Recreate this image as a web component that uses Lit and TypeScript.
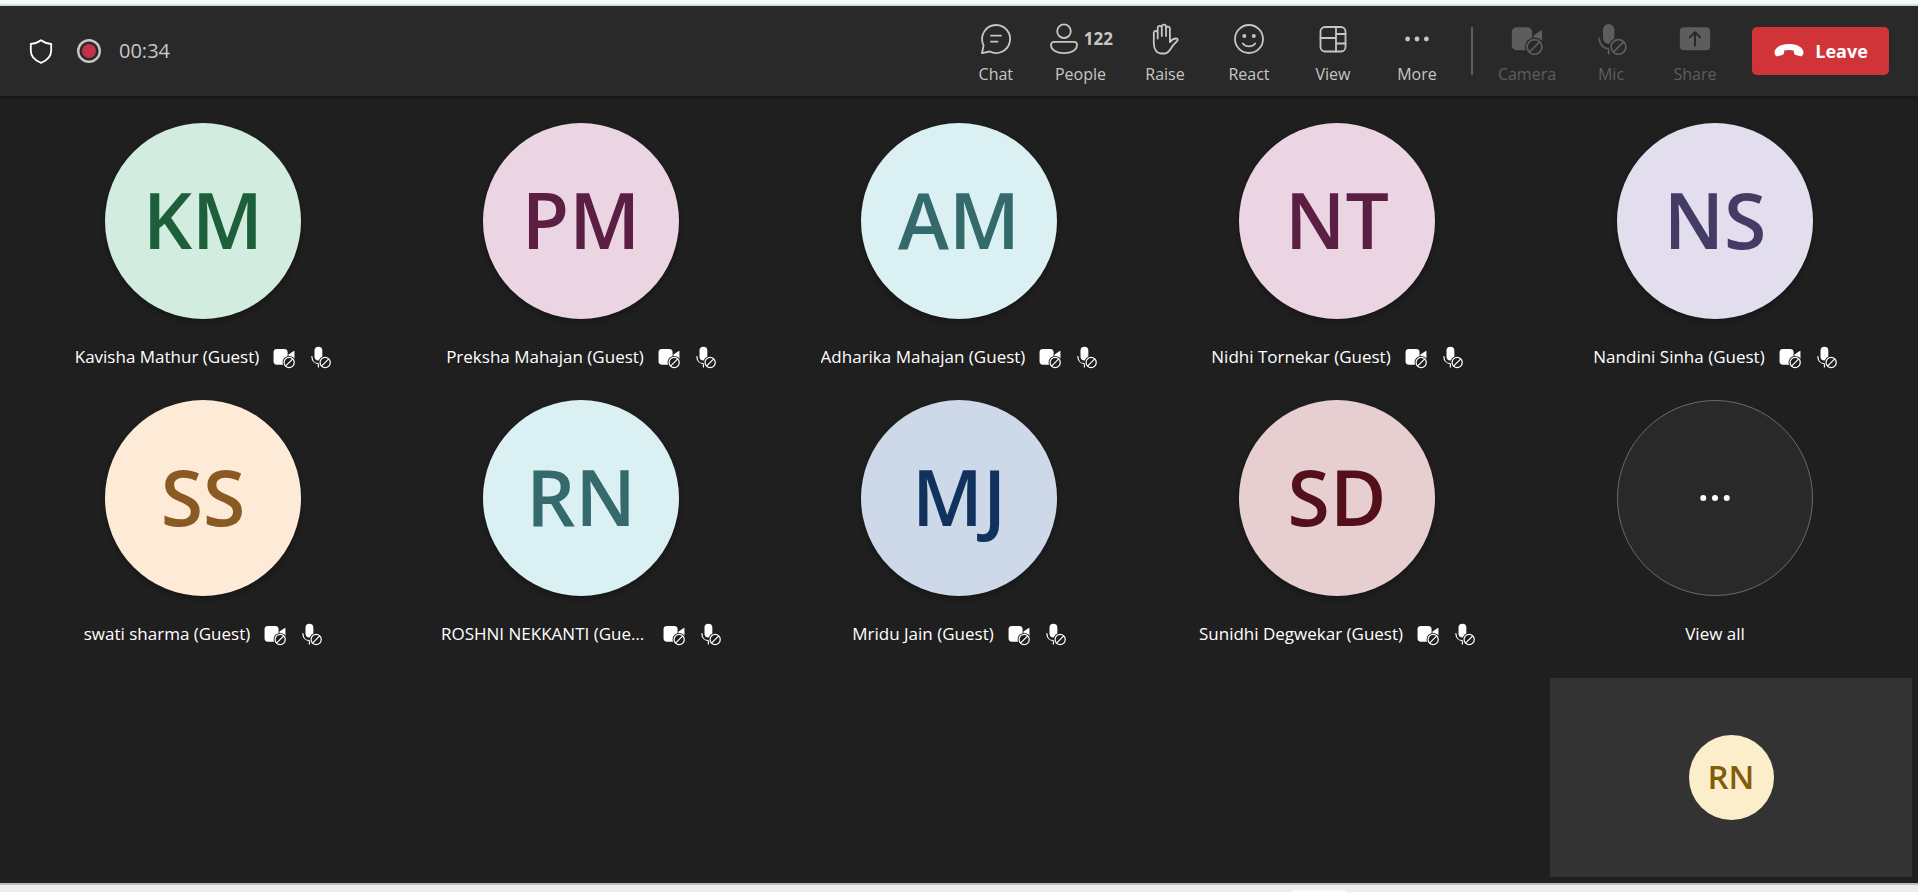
import { LitElement, html, css, svg, nothing } from "lit";
import { customElement, property } from "lit/decorators.js";

interface Participant {
  initials: string;
  name: string;
  bg: string;
  fg: string;
}

const PEOPLE: Participant[] = [
  { initials: "KM", name: "Kavisha Mathur (Guest)", bg: "#d2ecdf", fg: "#1c5f3a" },
  { initials: "PM", name: "Preksha Mahajan (Guest)", bg: "#ecd5e2", fg: "#5b1f43" },
  { initials: "AM", name: "Adharika Mahajan (Guest)", bg: "#dbf0f3", fg: "#346a6b" },
  { initials: "NT", name: "Nidhi Tornekar (Guest)", bg: "#ecd5e2", fg: "#5b1f43" },
  { initials: "NS", name: "Nandini Sinha (Guest)", bg: "#e2deee", fg: "#443c64" },
  { initials: "SS", name: "swati sharma (Guest)", bg: "#fdead7", fg: "#8a5a24" },
  { initials: "RN", name: "ROSHNI NEKKANTI (Guest)", bg: "#dbf0f3", fg: "#346a6b" },
  { initials: "MJ", name: "Mridu Jain (Guest)", bg: "#cdd9e9", fg: "#10325c" },
  { initials: "SD", name: "Sunidhi Degwekar (Guest)", bg: "#e7cfd1", fg: "#53101a" },
];

const blocked = svg`
  <circle class="cut" cx="23.5" cy="24" r="9.6"/>
  <circle class="line" cx="23.5" cy="24" r="7.4"/>
  <path class="line" d="M18.6 28.9 28.4 19.1"/>`;

const ICONS: Record<string, unknown> = {
  shield: svg`<path class="line" d="M16 5.2C19 7.4 22.4 8.6 26.2 8.8V15.5C26.2 21.5 22.4 25.3 16 27.8 9.6 25.3 5.8 21.5 5.8 15.5V8.8C9.6 8.6 13 7.4 16 5.2Z"/>`,
  record: svg`<circle cx="16" cy="16" r="10.8" fill="none" stroke="currentColor" stroke-width="2.4"/><circle cx="16" cy="16" r="7" fill="#c4314b"/>`,
  chat: svg`<path class="line" d="M16.2 2A14 14 0 1 1 9.8 28.5L2 30.2 3.6 22.3A14 14 0 0 1 16.2 2Z"/><path class="line" d="M11 12.7H21M11 18.7H17.5"/>`,
  people: svg`<circle class="line" cx="16" cy="8.2" r="6.8"/><path class="line" d="M6 18.8H26A3 3 0 0 1 29 21.8C29 27 23.5 30.2 16 30.2S3 27 3 21.8A3 3 0 0 1 6 18.8Z"/>`,
  raise: svg`<path class="line" d="M4.8 20V9.5a2 2 0 0 1 3.9 0V15.5M8.7 9.5V5a2 2 0 0 1 4.1 0V13M12.8 4.5V3.7a2.1 2.1 0 0 1 4.2 0V13M17 5.6a1.9 1.9 0 0 1 3.9 0V19.2C22.5 17 25 15 28 15.6c1 .4 .8 1.6 .2 2.2L24 22.4C21 26.5 19.5 30.5 16 30.5H12C7 30.5 4.8 25 4.8 20"/>`,
  react: svg`<circle class="line" cx="16" cy="16" r="14"/><circle cx="11.3" cy="13" r="2"/><circle cx="20.8" cy="13" r="2"/><path class="line" d="M9.8 20.5C13 24.3 19 24.3 22.2 20.5"/>`,
  view: svg`<rect class="line" x="3.5" y="4" width="25" height="24.5" rx="4.5"/><path class="line" d="M19 4V28.5M3.5 15H19M19 11H28.5M19 20.5H28.5"/>`,
  more: svg`<circle cx="6.6" cy="16" r="2.4"/><circle cx="16" cy="16" r="2.4"/><circle cx="25.4" cy="16" r="2.4"/>`,
  camera: svg`<rect x="0.8" y="4.2" width="20.4" height="23" rx="5"/><path d="M22.5 12.4 30.2 7.2Q31.2 6.8 31.2 8V22L22.5 18Z"/>${blocked}`,
  mic: svg`<rect x="8" y="1" width="11.4" height="20" rx="5.7"/><path class="line" d="M4.2 15.5C4.5 21.5 8.5 25.6 13.7 25.8V30.5"/>${blocked}`,
  share: svg`<rect x="0.8" y="4.2" width="30.4" height="23" rx="4"/><path d="M16 22.6V9.6M10.8 14.4 16 9.2 21.2 14.4" fill="none" stroke="var(--surface)" stroke-width="2" stroke-linecap="round" stroke-linejoin="round"/>`,
  phone: svg`<path d="M16 9C22.5 9 28 11 30 15.2 30.8 17.4 30.6 19.4 29.2 20.7 28.4 21.4 27.5 21.3 26.5 21L22.7 19.9C21.5 19.5 21 18.8 20.9 17.6L20.7 15.6C17.6 14.7 14.4 14.7 11.3 15.6L11.1 17.6C11 18.8 10.5 19.5 9.3 19.9L5.5 21C4.5 21.3 3.6 21.4 2.8 20.7 1.4 19.4 1.2 17.4 2 15.2 4 11 9.5 9 16 9Z"/>`,
};

@customElement("call-icon")
class CallIcon extends LitElement {
  @property() name = "";

  static styles = css`
    :host {
      display: block;
      flex: none;
      width: var(--icon-size, 32px);
      height: var(--icon-size, 32px);
    }
    svg {
      display: block;
      width: 100%;
      height: 100%;
      overflow: visible;
      fill: currentColor;
    }
    .line {
      fill: none;
      stroke: currentColor;
      stroke-width: 1.8;
      stroke-linecap: round;
      stroke-linejoin: round;
    }
    .cut {
      fill: var(--surface);
    }
  `;

  render() {
    return html`<svg viewBox="0 0 32 32" aria-hidden="true">${ICONS[this.name]}</svg>`;
  }
}

@customElement("tool-button")
class ToolButton extends LitElement {
  @property() icon = "";
  @property() label = "";
  @property() count = "";
  @property({ type: Boolean }) disabled = false;

  static styles = css`
    :host {
      display: block;
    }
    button {
      display: flex;
      flex-direction: column;
      align-items: center;
      gap: 7px;
      min-width: 84px;
      padding: 7px 0 0;
      border: 0;
      background: none;
      color: #c8c6c4;
      font: 400 16px/24px "Open Sans", "Noto Sans", sans-serif;
      cursor: pointer;
    }
    button:disabled {
      color: #5f5d5b;
      cursor: default;
    }
    .top {
      display: flex;
      align-items: center;
      gap: 4px;
    }
    .counted {
      padding: 0 10px;
    }
    .count {
      font-weight: 700;
      font-size: 17px;
    }
  `;

  render() {
    return html`<button ?disabled=${this.disabled}>
      <span class=${this.count ? "top counted" : "top"}>
        <call-icon name=${this.icon}></call-icon>
        ${this.count ? html`<span class="count">${this.count}</span>` : nothing}
      </span>
      <span>${this.label}</span>
    </button>`;
  }
}

@customElement("app-root")
class AppRoot extends LitElement {
  static styles = css`
    :host {
      --surface: #1f1f1f;
      display: flex;
      flex-direction: column;
      box-sizing: border-box;
      min-height: 100vh;
      background: #ededed;
      color: #fff;
      font: 400 17px/24px "Open Sans", "Noto Sans", sans-serif;
    }
    .strip {
      height: 4px;
      background: #f5fbf9;
      border-bottom: 2px solid #d8ebe3;
    }
    .bar {
      --surface: #292929;
      display: flex;
      align-items: center;
      justify-content: space-between;
      height: 90px;
      padding: 0 29px 0 25px;
      background: var(--surface);
      box-shadow: 0 1px 3px rgba(0, 0, 0, 0.4);
      z-index: 1;
    }
    .status,
    .tools {
      display: flex;
      align-items: center;
    }
    .status {
      gap: 16px;
    }
    .record {
      color: #c8c6c4;
    }
    .timer {
      margin-left: -2px;
      color: #c8c6c4;
      font-size: 20px;
      line-height: 24px;
    }
    .divider {
      width: 2px;
      height: 48px;
      margin: 0 12px;
      background: #5f5d5b;
    }
    .leave {
      display: flex;
      align-items: center;
      justify-content: center;
      gap: 10px;
      min-width: 137px;
      height: 48px;
      margin-left: 15px;
      padding: 0 18px;
      border: 0;
      border-radius: 5px;
      background: #d13438;
      color: #fff;
      font: 700 18px/24px "Open Sans", "Noto Sans", sans-serif;
      cursor: pointer;
    }
    .stage {
      display: flex;
      flex: 1;
      flex-direction: column;
      justify-content: space-between;
      padding-bottom: 6px;
      background: var(--surface);
      border-bottom: 2px solid #bdbdbd;
    }
    .grid {
      display: grid;
      grid-template-columns: repeat(5, minmax(0, 1fr));
      row-gap: 31px;
      margin: 0;
      padding: 27px 14px 0;
      list-style: none;
    }
    .person {
      display: flex;
      flex-direction: column;
      align-items: center;
      gap: 26px;
    }
    .avatar {
      display: grid;
      place-items: center;
      box-sizing: border-box;
      width: 196px;
      height: 196px;
      padding-bottom: 2px;
      border-radius: 50%;
      box-shadow: 0 3px 6px rgba(0, 0, 0, 0.3);
      font-size: 77px;
      font-weight: 600;
      line-height: 96px;
    }
    .caption {
      --icon-size: 22px;
      display: flex;
      align-items: center;
      gap: 14px;
    }
    .name {
      max-width: 208px;
      overflow: hidden;
      text-overflow: ellipsis;
      white-space: nowrap;
    }
    .all {
      padding: 0;
      border: 0;
      background: none;
      color: inherit;
      font: inherit;
      cursor: pointer;
    }
    .dots {
      --icon-size: 40px;
      padding: 0;
      border: 1px solid #6a6a6a;
      background: #292929;
      box-shadow: none;
    }
    .self {
      display: grid;
      place-items: center;
      align-self: flex-end;
      width: 362px;
      height: 199px;
      margin: 0 6px;
      background: #333;
    }
    .self .avatar {
      width: 85px;
      height: 85px;
      box-shadow: none;
      background: #fdeecb;
      color: #835c0b;
      font-size: 33px;
      line-height: 40px;
    }
    .taskbar {
      display: flex;
      height: 7px;
      padding-left: 67.3%;
    }
    .tab {
      align-self: flex-end;
      width: 55px;
      height: 2px;
      border-radius: 3px 3px 0 0;
      background: #fafafa;
    }
  `;

  render() {
    return html`
      <div class="strip"></div>
      <header class="bar">
        <div class="status">
          <call-icon name="shield"></call-icon>
          <call-icon class="record" name="record"></call-icon>
          <span class="timer">00:34</span>
        </div>
        <nav class="tools" aria-label="Meeting controls">
          <tool-button icon="chat" label="Chat"></tool-button>
          <tool-button icon="people" label="People" count="122"></tool-button>
          <tool-button icon="raise" label="Raise"></tool-button>
          <tool-button icon="react" label="React"></tool-button>
          <tool-button icon="view" label="View"></tool-button>
          <tool-button icon="more" label="More"></tool-button>
          <span class="divider"></span>
          <tool-button icon="camera" label="Camera" disabled></tool-button>
          <tool-button icon="mic" label="Mic" disabled></tool-button>
          <tool-button icon="share" label="Share" disabled></tool-button>
          <button class="leave"><call-icon name="phone"></call-icon>Leave</button>
        </nav>
      </header>
      <main class="stage">
        <ul class="grid">
          ${PEOPLE.map(
            (p) => html`<li class="person">
              <div class="avatar" style="background:${p.bg};color:${p.fg}">${p.initials}</div>
              <div class="caption">
                <span class="name">${p.name}</span>
                <call-icon name="camera"></call-icon>
                <call-icon name="mic"></call-icon>
              </div>
            </li>`
          )}
          <li class="person">
            <button class="person all">
              <span class="avatar dots"><call-icon name="more"></call-icon></span>
              <span>View all</span>
            </button>
          </li>
        </ul>
        <section class="self" aria-label="You">
          <div class="avatar">RN</div>
        </section>
      </main>
      <footer class="taskbar"><span class="tab"></span></footer>
    `;
  }
}
